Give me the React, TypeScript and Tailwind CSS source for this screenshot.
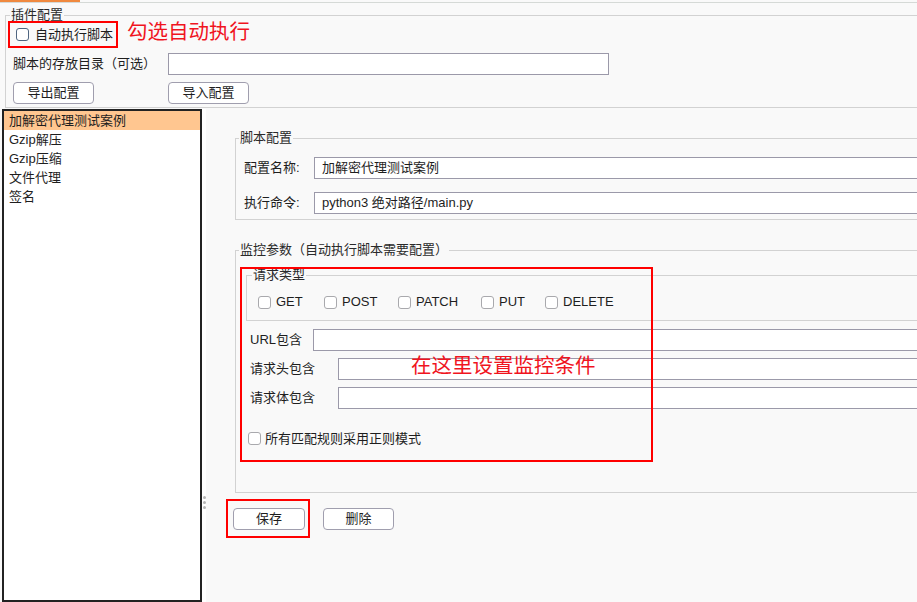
import clsx from "clsx";

const FONT = "font-['Liberation_Sans','Noto_Sans_CJK_SC',sans-serif]";

const ITEMS = ["加解密代理测试案例", "Gzip解压", "Gzip压缩", "文件代理", "签名"];

const METHODS = [
  { label: "GET", w: "w-[66px]" },
  { label: "POST", w: "w-[74px]" },
  { label: "PATCH", w: "w-[83px]" },
  { label: "PUT", w: "w-[64px]" },
  { label: "DELETE", w: "w-[80px]" },
];

function Box({ accent }: { accent?: boolean }) {
  return (
    <span
      className={clsx(
        "block w-[13px] h-[13px] shrink-0 rounded-[3px] border bg-white",
        accent ? "border-[#4f6580]" : "border-[#a9a9ad]",
      )}
    />
  );
}

function Field({ value = "", className }: { value?: string; className?: string }) {
  return (
    <div
      className={clsx(
        "h-[22px] border border-[#9b99a9] bg-white pl-[7px] flex items-center text-[13px] text-[#1e1e1e] whitespace-nowrap",
        className,
      )}
    >
      {value}
    </div>
  );
}

function Button({ label, className }: { label: string; className?: string }) {
  return (
    <div
      className={clsx(
        "h-[22px] rounded-[4px] border border-[#a09eae] bg-white flex items-center justify-center text-[13px] text-[#1e1e1e]",
        className,
      )}
    >
      {label}
    </div>
  );
}

function Legend({ text, className }: { text: string; className?: string }) {
  return (
    <legend className={clsx("px-[1px] text-[13px] leading-[16px] text-[#2a2a2a]", className)}>
      {text}
    </legend>
  );
}

export default function App() {
  return (
    <div
      className={clsx(
        "relative w-[917px] h-[602px] overflow-hidden bg-[#f9f9f9] flex flex-col text-[13px] text-[#1e1e1e]",
        FONT,
      )}
    >
      {/* tab strip */}
      <div className="h-[3px] shrink-0 border-b border-[#d5d9d6]">
        <div className="w-[80px] h-[2px] bg-[#f0893f]" />
      </div>

      {/* 插件配置 */}
      <fieldset className="mt-[4px] ml-[5px] border-l border-t border-b border-[#d2d2d2] pl-[7px] pb-[3px] shrink-0">
        <Legend text="插件配置" className="-ml-[3px]" />
        <div className="h-[23px] flex items-center gap-[6px] ml-[3px]">
          <Box accent />
          <span>自动执行脚本</span>
        </div>
        <div className="mt-[7px] h-[22px] flex items-center">
          <span className="w-[155px]">脚本的存放目录（可选）</span>
          <Field className="w-[441px]" />
        </div>
        <div className="mt-[7px] flex items-center">
          <Button label="导出配置" className="w-[81px]" />
          <Button label="导入配置" className="w-[81px] ml-[74px]" />
        </div>
      </fieldset>

      {/* lower split pane */}
      <div className="mt-[1px] flex-1 flex min-h-0">
        <div className="ml-[2px] w-[200px] border-2 border-[#222] bg-white">
          {ITEMS.map((item, i) => (
            <div
              key={item}
              className={clsx(
                "h-[19px] pl-[5px] flex items-center whitespace-nowrap",
                i === 0 && "bg-[#ffc690]",
              )}
            >
              {item}
            </div>
          ))}
        </div>

        <div className="w-[4px] flex flex-col items-center gap-[2px] pt-[387px] bg-white">
          <span className="block w-[3px] h-[3px] rounded-full bg-[#b5b5b5]" />
          <span className="block w-[3px] h-[3px] rounded-full bg-[#b5b5b5]" />
          <span className="block w-[3px] h-[3px] rounded-full bg-[#b5b5b5]" />
        </div>

        <div className="flex-1 overflow-hidden">
          <div className="w-[820px] pt-[21px]">
            {/* 脚本配置 */}
            <fieldset className="ml-[29px] border-l border-t border-b border-[#d2d2d2] pl-[8px] pb-[5px]">
              <Legend text="脚本配置" className="-ml-[5px]" />
              <div className="mt-[11px] flex items-center">
                <span className="w-[70px]">配置名称:</span>
                <Field value="加解密代理测试案例" className="flex-1" />
              </div>
              <div className="mt-[13px] flex items-center">
                <span className="w-[70px]">执行命令:</span>
                <Field value="python3 绝对路径/main.py" className="flex-1" />
              </div>
            </fieldset>

            {/* 监控参数 */}
            <fieldset className="mt-[22px] ml-[29px] border-l border-t border-b border-[#d2d2d2] pb-[47px]">
              <Legend text="监控参数（自动执行脚本需要配置）" className="ml-[3px]" />
              <fieldset className="mt-[9px] ml-[10px] border-l border-t border-b border-[#d2d2d2] pl-[11px] pb-[11px]">
                <Legend text="请求类型" className="-ml-[6px]" />
                <div className="mt-[12px] h-[14px] flex items-center">
                  {METHODS.map((m) => (
                    <div key={m.label} className={clsx("flex items-center gap-[5px]", m.w)}>
                      <Box />
                      <span>{m.label}</span>
                    </div>
                  ))}
                </div>
              </fieldset>
              <div className="mt-[8px] pl-[14px] flex items-center">
                <span className="w-[63px]">URL包含</span>
                <Field className="flex-1" />
              </div>
              <div className="mt-[7px] pl-[14px] flex items-center">
                <span className="w-[88px]">请求头包含</span>
                <Field className="flex-1" />
              </div>
              <div className="mt-[7px] pl-[14px] flex items-center">
                <span className="w-[88px]">请求体包含</span>
                <Field className="flex-1" />
              </div>
              <div className="mt-[23px] ml-[12px] h-[13px] flex items-center gap-[4px]">
                <Box />
                <span>所有匹配规则采用正则模式</span>
              </div>
            </fieldset>

            <div className="mt-[15px] ml-[27px] flex items-center gap-[18px]">
              <Button label="保存" className="w-[72px]" />
              <Button label="删除" className="w-[71px]" />
            </div>
          </div>
        </div>
      </div>

      {/* annotations */}
      <div className="absolute left-[8px] top-[21px] w-[110px] h-[27px] border-2 border-[#f00]" />
      <div className="absolute left-[127px] top-[18px] text-[20.5px] leading-[28px] text-[#f0141e] whitespace-nowrap">
        勾选自动执行
      </div>
      <div className="absolute left-[240px] top-[267px] w-[413px] h-[195px] border-2 border-[#f00]" />
      <div className="absolute left-[411px] top-[352px] text-[20.5px] leading-[28px] text-[#f0141e] whitespace-nowrap">
        在这里设置监控条件
      </div>
      <div className="absolute left-[226px] top-[499px] w-[84px] h-[39px] border-2 border-[#f00]" />
    </div>
  );
}
